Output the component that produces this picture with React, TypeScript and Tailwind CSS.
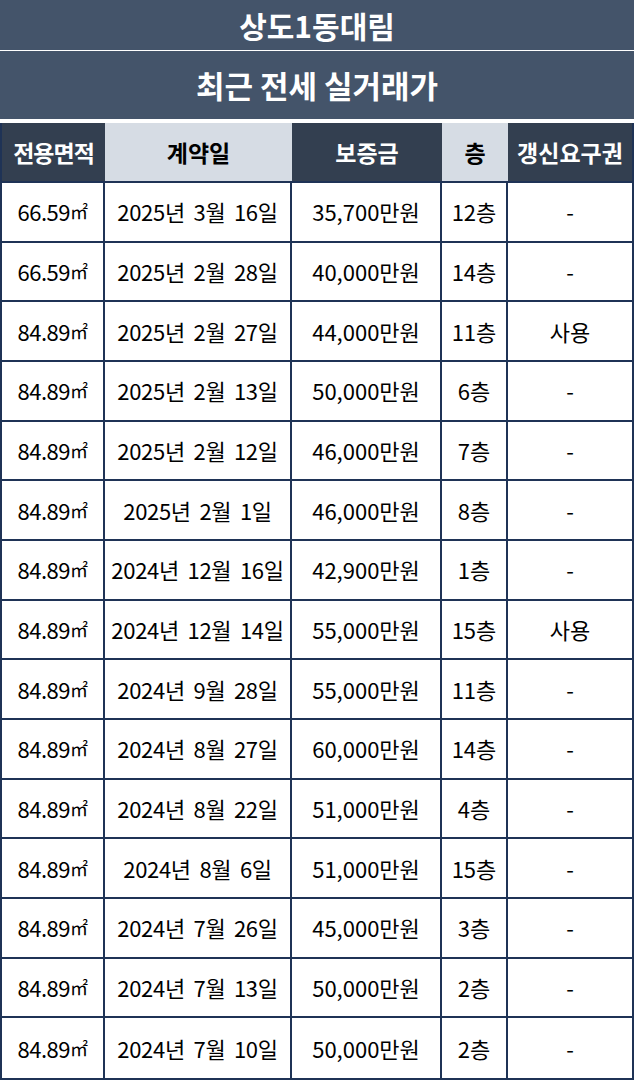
const rows = [
  ['66.59', '2025년 3월 16일', '35,700만원', '12층', '-'],
  ['66.59', '2025년 2월 28일', '40,000만원', '14층', '-'],
  ['84.89', '2025년 2월 27일', '44,000만원', '11층', '사용'],
  ['84.89', '2025년 2월 13일', '50,000만원', '6층', '-'],
  ['84.89', '2025년 2월 12일', '46,000만원', '7층', '-'],
  ['84.89', '2025년 2월 1일', '46,000만원', '8층', '-'],
  ['84.89', '2024년 12월 16일', '42,900만원', '1층', '-'],
  ['84.89', '2024년 12월 14일', '55,000만원', '15층', '사용'],
  ['84.89', '2024년 9월 28일', '55,000만원', '11층', '-'],
  ['84.89', '2024년 8월 27일', '60,000만원', '14층', '-'],
  ['84.89', '2024년 8월 22일', '51,000만원', '4층', '-'],
  ['84.89', '2024년 8월 6일', '51,000만원', '15층', '-'],
  ['84.89', '2024년 7월 26일', '45,000만원', '3층', '-'],
  ['84.89', '2024년 7월 13일', '50,000만원', '2층', '-'],
  ['84.89', '2024년 7월 10일', '50,000만원', '2층', '-'],
];

const cols = 'grid grid-cols-[103px_187px_150px_66px_1fr]';

const App = () => (
  <div className="w-[634px] h-[1080px] bg-white font-['Noto_Sans_CJK_KR',sans-serif]">
    <div className="h-[50px] bg-[#44546a] flex items-center justify-center text-white text-[30px] font-bold">
      상도1동대림
    </div>
    <div className="h-px bg-white" />
    <div className="h-[68px] bg-[#44546a] flex items-center justify-center text-white text-[31px] font-bold">
      최근 전세 실거래가
    </div>
    <div className="h-[4px]" />

    <div className="border-l-2 border-r-2 border-b-2 border-[#1f3356]">
      {/* Header */}
      <div className={`${cols} h-[60px] text-[23px] font-bold border-b-2 border-[#1f3356]`}>
        <div className="bg-[#333f50] text-white flex items-center justify-center tracking-[-1px]">전용면적</div>
        <div className="bg-[#d6dce4] text-black flex items-center justify-center">계약일</div>
        <div className="bg-[#333f50] text-white flex items-center justify-center">보증금</div>
        <div className="bg-[#d6dce4] text-black flex items-center justify-center">층</div>
        <div className="bg-[#333f50] text-white flex items-center justify-center">갱신요구권</div>
      </div>

      {rows.map((r, i) => (
        <div
          key={i}
          className={`${cols} h-[59.67px] text-[22px] text-black ${i < rows.length - 1 ? 'border-b-2 border-[#1f3356]' : ''}`}
        >
          <div className="flex items-center justify-center border-r-2 border-[#1f3356] tracking-[-0.5px]">
            {r[0]}
            <span className="text-[18px]">㎡</span>
          </div>
          <div className="flex items-center justify-center border-r-2 border-[#1f3356] whitespace-pre tracking-[-0.3px] [word-spacing:4px]">
            {r[1]}
          </div>
          <div className="flex items-center justify-center border-r-2 border-[#1f3356]">{r[2]}</div>
          <div className="flex items-center justify-center border-r-2 border-[#1f3356]">{r[3]}</div>
          <div className="flex items-center justify-center">{r[4]}</div>
        </div>
      ))}
    </div>
  </div>
);

export default App;
